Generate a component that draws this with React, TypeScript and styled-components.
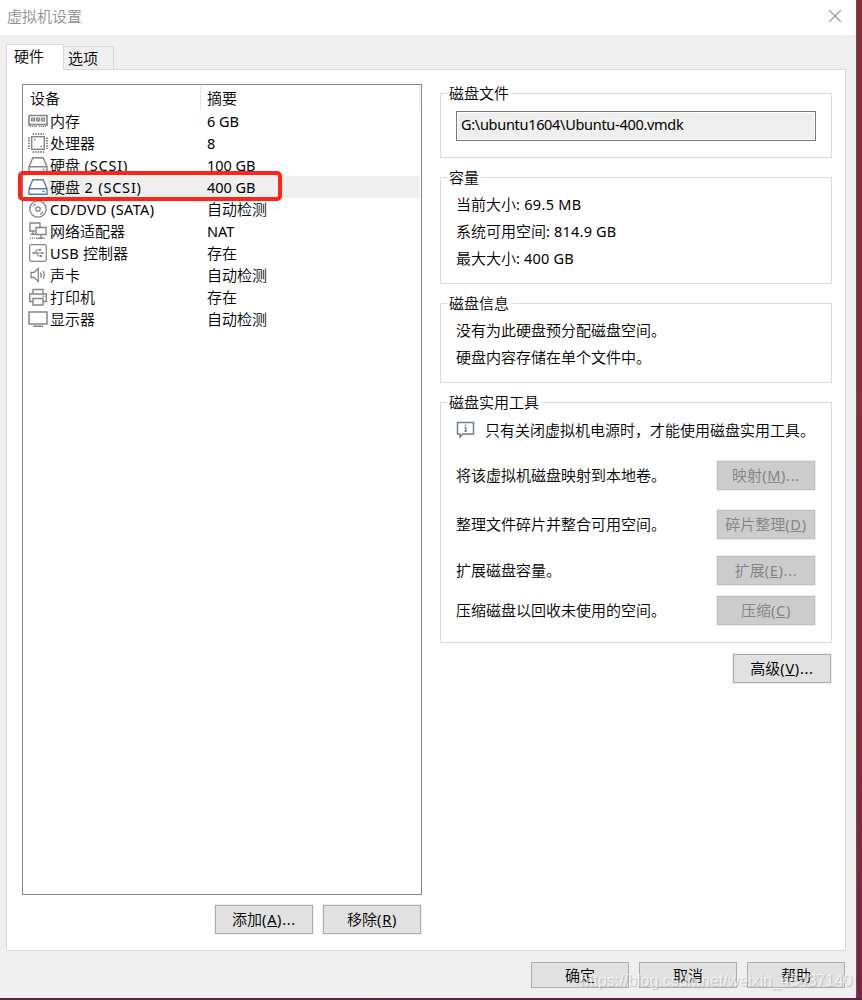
import React from "react";
import styled, { createGlobalStyle, css } from "styled-components";

const GlobalStyle = createGlobalStyle`
  *, *::before, *::after { box-sizing: border-box; }
  body {
    margin: 0;
    background: #fff;
    overflow: hidden;
    color: #000;
    font: 350 15px/20px "Noto Sans CJK SC", sans-serif;
  }
`;

const Desktop = styled.div`
  position: relative;
  width: 862px;
  height: 1000px;
  padding: 0 6px 2px 0;
  background: linear-gradient(#8a2a2e 0, #8c2a35 400px, #8a2838 700px, #7a2145 1000px);
`;

const BottomEdge = styled.div`
  height: 2px;
  width: 862px;
  background: linear-gradient(90deg, #5a2545, #5c2145);
`;

const Window = styled.div`
  display: flex;
  flex-direction: column;
  width: 857px;
  height: 998px;
  background: #efefef;
  border-right: 1px solid #6f4a50;
`;

const TitleBar = styled.header`
  display: flex;
  justify-content: space-between;
  height: 35px;
  padding: 6px 15px 0 7px;
  background: #fff;
  color: #8f8f8f;
`;

const CloseIcon = styled.svg`
  width: 12px;
  height: 12px;
  margin-top: 4px;
`;

const Tabs = styled.nav`
  display: flex;
  align-items: flex-end;
  height: 35px;
  padding-left: 6px;
  margin-bottom: -1px;
  position: relative;
`;

const Tab = styled.div<{ $active?: boolean }>`
  border: 1px solid #d9d9d9;
  ${(p) =>
    p.$active
      ? css`
          width: 58px;
          height: 26px;
          padding: 1px 0 0 7px;
          background: #fff;
          border-bottom-color: #fff;
        `
      : css`
          width: 51px;
          height: 24px;
          margin-left: -1px;
          padding: 1px 0 0 4px;
          background: #efefef;
        `}
`;

const Page = styled.main`
  display: flex;
  gap: 18px;
  width: 840px;
  height: 882px;
  margin-left: 6px;
  padding: 14px 13px 0 15px;
  background: #fff;
  border: 1px solid #d9d9d9;
`;

const LeftColumn = styled.section`
  width: 400px;
`;

const RightColumn = styled.section`
  display: flex;
  flex-direction: column;
  width: 392px;
  padding-top: 9px;
`;

const DeviceList = styled.div`
  height: 811px;
  border: 1px solid #828790;
  padding: 1px 1px 0 0;
`;

const ListHeader = styled.div`
  display: flex;
  height: 24px;
  border-right: 1px solid #e5e5e5;
`;

const HeaderCell = styled.div<{ $width?: number }>`
  width: ${(p) => (p.$width ? `${p.$width}px` : "auto")};
  padding: 2px 0 0 ${(p) => (p.$width ? 7 : 6)}px;
  border-right: ${(p) => (p.$width ? "1px solid #e5e5e5" : "none")};
`;

const Row = styled.div`
  display: flex;
  height: 22px;
  padding-left: 5px;
`;

const IconCell = styled.div`
  width: 20px;
  height: 22px;
  svg { display: block; width: 20px; height: 22px; }
`;

const RowBody = styled.div<{ $selected?: boolean }>`
  display: flex;
  flex: 1;
  line-height: 22px;
  padding-left: 2px;
  background: ${(p) => (p.$selected ? "#efefef" : "transparent")};
`;

const DeviceName = styled.span`
  width: 157px;
  white-space: pre;
`;

const Highlight = styled.div`
  position: absolute;
  left: 18px;
  top: 171px;
  width: 264px;
  height: 30px;
  border: 4px solid #ff2416;
  border-radius: 5px;
`;

const Latin = styled.span<{ $track?: number }>`
  font-family: "Noto Sans", sans-serif;
  font-weight: 400;
  font-size: 14.5px;
  letter-spacing: ${(p) => p.$track ?? 0}px;
  line-height: 1;
  white-space: pre;
`;

const ButtonBar = styled.div<{ $top: number }>`
  display: flex;
  justify-content: flex-end;
  gap: 10px;
  padding: ${(p) => p.$top}px 1px 0 0;
`;

const Button = styled.button<{ $short?: boolean }>`
  width: 98px;
  height: ${(p) => (p.$short ? 26 : 29)}px;
  flex: none;
  padding: 0 0 2px;
  border: 1px solid #adadad;
  background: #e1e1e1;
  box-shadow: 0 0 0 1px #efefef;
  color: #000;
  font: inherit;
  line-height: ${(p) => (p.$short ? 23 : 25)}px;
  text-align: center;
  white-space: nowrap;
  &:disabled {
    border-color: #bfbfbf;
    background: #ccc;
    color: #838383;
  }
`;

const Group = styled.section<{ $height: number; $gap?: number }>`
  height: ${(p) => p.$height}px;
  margin-bottom: ${(p) => p.$gap ?? 19}px;
  padding: 0 15px;
  border: 1px solid #dcdcdc;
`;

const Legend = styled.h2`
  width: fit-content;
  height: 20px;
  margin: -11px 0 0 -9px;
  padding: 0 2px;
  background: #fff;
  font: inherit;
`;

const PathField = styled.div`
  height: 30px;
  margin-top: 8px;
  padding: 1px 4px;
  border: 1px solid #7a7a7a;
  box-shadow: inset 0 0 0 1px #fff;
  background: #efefef;
  line-height: 22px;
`;

const Lines = styled.div`
  padding-top: 3px;
  line-height: 27px;
`;

const InfoLine = styled.div`
  display: flex;
  height: 20px;
  margin-top: 8px;
  white-space: nowrap;
  svg { flex: none; width: 19px; height: 20px; margin-right: 10px; }
`;

const ToolRow = styled.div<{ $top: number }>`
  display: flex;
  justify-content: space-between;
  height: 29px;
  margin-top: ${(p) => p.$top}px;
  padding-right: 1px;
  line-height: 27px;
  white-space: nowrap;
`;

const Footer = styled.footer`
  display: flex;
  gap: 10px;
  padding: 11px 0 0 531px;
`;

const Watermark = styled.div`
  position: absolute;
  left: 580px;
  top: 971px;
  color: rgba(255, 255, 255, 0.7);
  font: 16px/20px "Liberation Sans", sans-serif;
  text-shadow: 1px 1px 1px rgba(120, 120, 120, 0.4);
  white-space: nowrap;
`;

/* Latin runs use their own face and tracking beside the Chinese text. */
function Mixed({ text, track }: { text: string; track?: number }) {
  return (
    <>
      {text.split(/([\x20-\x7e]+)/).map((part, i) =>
        i % 2 ? <Latin key={i} $track={track}>{part}</Latin> : part
      )}
    </>
  );
}

function AccessLabel({ text, hotkey, dots }: { text: string; hotkey: string; dots?: boolean }) {
  return (
    <>
      {text}
      <Latin $track={0.7}>
        (<u>{hotkey}</u>){dots ? "..." : ""}
      </Latin>
    </>
  );
}

const G = "#858585";

const DiskIcon = ({ color = G }: { color?: string }) => (
  <svg viewBox="0 0 20 22" fill="none" stroke={color} strokeWidth="1.4">
    <path d="M1 12.7 4.8 3.7h10.4L19 12.7V18.3H1zM1 12.7h18" />
    <path d="M14.5 15.5h2" />
  </svg>
);

const icons: Record<string, React.ReactNode> = {
  memory: (
    <svg viewBox="0 0 20 22" fill="none" stroke={G}>
      <path d="M1 5.5h18M1 5v11M19 5v11M1 14.5h18" strokeWidth="1.6" />
      <path d="M3.5 8h3v3h-3zM8.5 8h3v3h-3zM13.5 8h3v3h-3z" fill="#bbb" strokeWidth="1.2" />
      <path d="M2 16.3h7M11 16.3h7" strokeWidth="1.5" strokeDasharray="1.3 .7" />
    </svg>
  ),
  cpu: (
    <svg viewBox="0 0 20 22" fill="none" stroke={G}>
      <rect x="3.7" y="4.7" width="12.6" height="12.6" strokeWidth="1.4" />
      <path d="M4.6 2h11.5M4.6 20h11.5" strokeWidth="2" strokeDasharray="1.4 1.2" />
      <path d="M1 5.5v11.5M19 5.5v11.5" strokeWidth="2" strokeDasharray="1.4 1.2" />
      <path d="M6 7.5h1.5M12.5 14.5H14" strokeWidth="1.5" />
    </svg>
  ),
  disk: <DiskIcon />,
  diskSelected: <DiskIcon color="#5d7f9d" />,
  cd: (
    <svg viewBox="0 0 20 22" fill="none" stroke={G} strokeWidth="1.3">
      <circle cx="10" cy="11" r="8.2" />
      <circle cx="10" cy="11" r="2.2" />
      <path d="M5 8.3A5.5 5.5 0 0 1 8 5.8M15 13.7a5.5 5.5 0 0 1-3 2.5" />
    </svg>
  ),
  network: (
    <svg viewBox="0 0 20 22" fill="none" stroke={G} strokeWidth="1.4">
      <path d="M7 11H2V3h10v4M5 11v3M2.5 14.3H8" />
      <path d="M8 7.5h10v7H8zM13 14.5V18M9.5 18.3h7" />
      <path d="M2 18.3h7" strokeDasharray="1 1" />
    </svg>
  ),
  usb: (
    <svg viewBox="0 0 20 22" fill="none" stroke={G} strokeWidth="1.2">
      <rect x="1.7" y="2.7" width="16.6" height="16.6" rx="1.5" />
      <path d="M5 11h10M7 11l2-3h3M8.5 11l2 3H13" />
      <path d="M4.5 11h2M12 7v2M13 13v2M14.5 10v2" strokeWidth="2" />
    </svg>
  ),
  sound: (
    <svg viewBox="0 0 20 22" fill="none" stroke={G} strokeWidth="1.3">
      <path d="M3 8.5h3l4.3-4v13L6 13.5H3z" />
      <path d="M12.5 8.5c1 1.5 1 3.5 0 5M15 7c1.6 2.5 1.6 5.5 0 8" />
    </svg>
  ),
  printer: (
    <svg viewBox="0 0 20 22" fill="none" stroke={G} strokeWidth="1.4">
      <path d="M5 8V3.5h10V8M5 15.5H1.7V8h16.6v7.5H15M5 12.5h10v6.5H5z" />
      <path d="M14.5 10.3h2" />
    </svg>
  ),
  display: (
    <svg viewBox="0 0 20 22" fill="none" stroke={G} strokeWidth="1.5">
      <path d="M1 4h18v12H1zM5 18.3h10" />
    </svg>
  ),
};

const devices = [
  { icon: "memory", name: "内存", summary: "6 GB" },
  { icon: "cpu", name: "处理器", summary: "8" },
  { icon: "disk", name: "硬盘 (SCSI)", summary: "100 GB", track: 0.8 },
  { icon: "diskSelected", name: "硬盘 2 (SCSI)", summary: "400 GB", selected: true, track: 0.8 },
  { icon: "cd", name: "CD/DVD (SATA)", summary: "自动检测", track: 0.35 },
  { icon: "network", name: "网络适配器", summary: "NAT" },
  { icon: "usb", name: "USB 控制器", summary: "存在", track: 0.3 },
  { icon: "sound", name: "声卡", summary: "自动检测" },
  { icon: "printer", name: "打印机", summary: "存在" },
  { icon: "display", name: "显示器", summary: "自动检测" },
];

const tools = [
  { text: "将该虚拟机磁盘映射到本地卷。", label: "映射", hotkey: "M", dots: true, top: 21 },
  { text: "整理文件碎片并整合可用空间。", label: "碎片整理", hotkey: "D", top: 20 },
  { text: "扩展磁盘容量。", label: "扩展", hotkey: "E", dots: true, top: 17 },
  { text: "压缩磁盘以回收未使用的空间。", label: "压缩", hotkey: "C", top: 11 },
];

export default function App() {
  return (
    <Desktop>
      <GlobalStyle />
      <Window>
        <TitleBar>
          虚拟机设置
          <CloseIcon viewBox="0 0 12 12" stroke="#8a8a8a" strokeWidth="1.1">
            <path d="M0 0 12 12M12 0 0 12" />
          </CloseIcon>
        </TitleBar>
        <Tabs>
          <Tab $active>硬件</Tab>
          <Tab>选项</Tab>
        </Tabs>
        <Page>
          <LeftColumn>
            <DeviceList>
              <ListHeader>
                <HeaderCell $width={178}>设备</HeaderCell>
                <HeaderCell>摘要</HeaderCell>
              </ListHeader>
              {devices.map((d) => (
                <Row key={d.name}>
                  <IconCell>{icons[d.icon]}</IconCell>
                  <RowBody $selected={d.selected}>
                    <DeviceName>
                      <Mixed text={d.name} track={d.track} />
                    </DeviceName>
                    <span>
                      <Mixed text={d.summary} track={-0.05} />
                    </span>
                  </RowBody>
                </Row>
              ))}
            </DeviceList>
            <ButtonBar $top={10}>
              <Button>
                <AccessLabel text="添加" hotkey="A" dots />
              </Button>
              <Button>
                <AccessLabel text="移除" hotkey="R" />
              </Button>
            </ButtonBar>
          </LeftColumn>
          <RightColumn>
            <Group $height={65}>
              <Legend>磁盘文件</Legend>
              <PathField>
                <Mixed text="G:\ubuntu1604\Ubuntu-400.vmdk" track={-0.3} />
              </PathField>
            </Group>
            <Group $height={107}>
              <Legend>容量</Legend>
              <Lines>
                <div><Mixed text="当前大小: 69.5 MB" track={0.3} /></div>
                <div><Mixed text="系统可用空间: 814.9 GB" track={0.2} /></div>
                <div><Mixed text="最大大小: 400 GB" track={0.2} /></div>
              </Lines>
            </Group>
            <Group $height={80}>
              <Legend>磁盘信息</Legend>
              <Lines>
                <div>没有为此硬盘预分配磁盘空间。</div>
                <div>硬盘内容存储在单个文件中。</div>
              </Lines>
            </Group>
            <Group $height={241} $gap={11}>
              <Legend>磁盘实用工具</Legend>
              <InfoLine>
                <svg viewBox="0 0 19 20" fill="none" stroke="#6a7f90" strokeWidth="1.5">
                  <path d="M1.5 2.5h16v11.5H7l-3 3v-3H1.5z" />
                  <path d="M9.5 4.5v1.5M8.5 7.5h1.3v3.5M8.2 11.2h3" strokeWidth="1.3" />
                </svg>
                只有关闭虚拟机电源时，才能使用磁盘实用工具。
              </InfoLine>
              {tools.map((t) => (
                <ToolRow key={t.hotkey} $top={t.top}>
                  {t.text}
                  <Button disabled>
                    <AccessLabel text={t.label} hotkey={t.hotkey} dots={t.dots} />
                  </Button>
                </ToolRow>
              ))}
            </Group>
            <ButtonBar $top={0}>
              <Button>
                <AccessLabel text="高级" hotkey="V" dots />
              </Button>
            </ButtonBar>
          </RightColumn>
        </Page>
        <Footer>
          <Button $short>确定</Button>
          <Button $short>取消</Button>
          <Button $short>帮助</Button>
        </Footer>
      </Window>
      <BottomEdge />
      <Highlight />
      <Watermark>https://blog.csdn.net/weixin_45437140</Watermark>
    </Desktop>
  );
}
